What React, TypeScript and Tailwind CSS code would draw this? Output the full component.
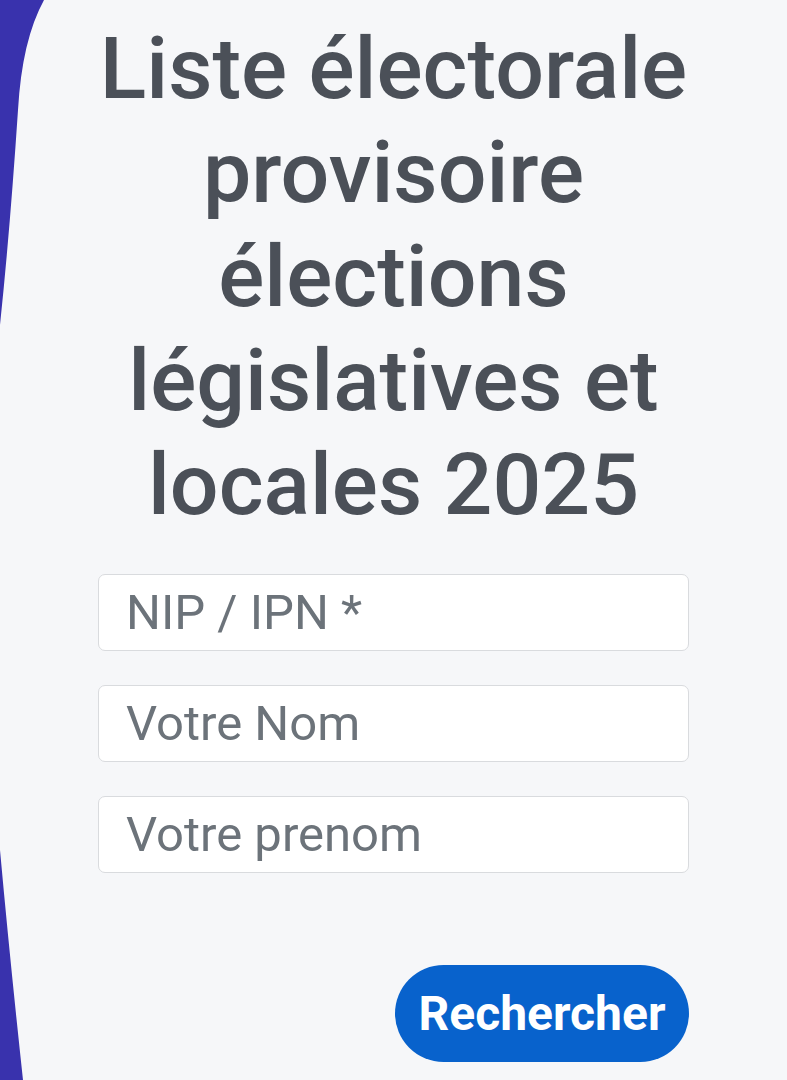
import { useState } from "react";

function SideCurve() {
    return (
        <svg
            className="absolute left-0 top-0 pointer-events-none"
            width="60"
            height="1080"
            viewBox="0 0 60 1080"
        >
            <path d="M0 0 L44 0 Q22 40 18 110 Q10 230 0 325 Z" fill="#3932ad" />
            <path d="M0 850 Q10 960 23 1080 L0 1080 Z" fill="#3932ad" />
        </svg>
    );
}

export default function App() {
    const [nip, setNip] = useState("");
    const [nom, setNom] = useState("");
    const [prenom, setPrenom] = useState("");

    const inputClass =
        "w-full h-[77px] px-[27px] bg-white border border-[#d9dbde] rounded-[7px] text-[49px] text-[#4b5058] placeholder-[#6c737a] focus:outline-none";

    return (
        <div className="relative min-h-screen h-[1080px] overflow-hidden bg-[#f6f7f9] font-['Roboto',sans-serif]">
            <SideCurve />
            <div className="w-[591px] ml-[98px] pt-[17px] flex flex-col">
                <h1 className="text-center text-[86px] leading-[104px] font-medium text-[#4b5058] -mx-[40px]">
                    Liste électorale provisoire élections législatives et locales 2025
                </h1>

                <form
                    className="mt-[37px] flex flex-col gap-[34px]"
                    onSubmit={(e) => e.preventDefault()}
                >
                    <input
                        type="text"
                        value={nip}
                        onChange={(e) => setNip(e.target.value)}
                        placeholder="NIP / IPN *"
                        className={inputClass}
                    />
                    <input
                        type="text"
                        value={nom}
                        onChange={(e) => setNom(e.target.value)}
                        placeholder="Votre Nom"
                        className={inputClass}
                    />
                    <input
                        type="text"
                        value={prenom}
                        onChange={(e) => setPrenom(e.target.value)}
                        placeholder="Votre prenom"
                        className={inputClass}
                    />

                    <div className="flex justify-end mt-[58px]">
                        <button
                            type="submit"
                            className="h-[97px] w-[294px] rounded-full bg-[#0862cc] text-white text-[48px] font-bold"
                        >
                            Rechercher
                        </button>
                    </div>
                </form>
            </div>
        </div>
    );
}
